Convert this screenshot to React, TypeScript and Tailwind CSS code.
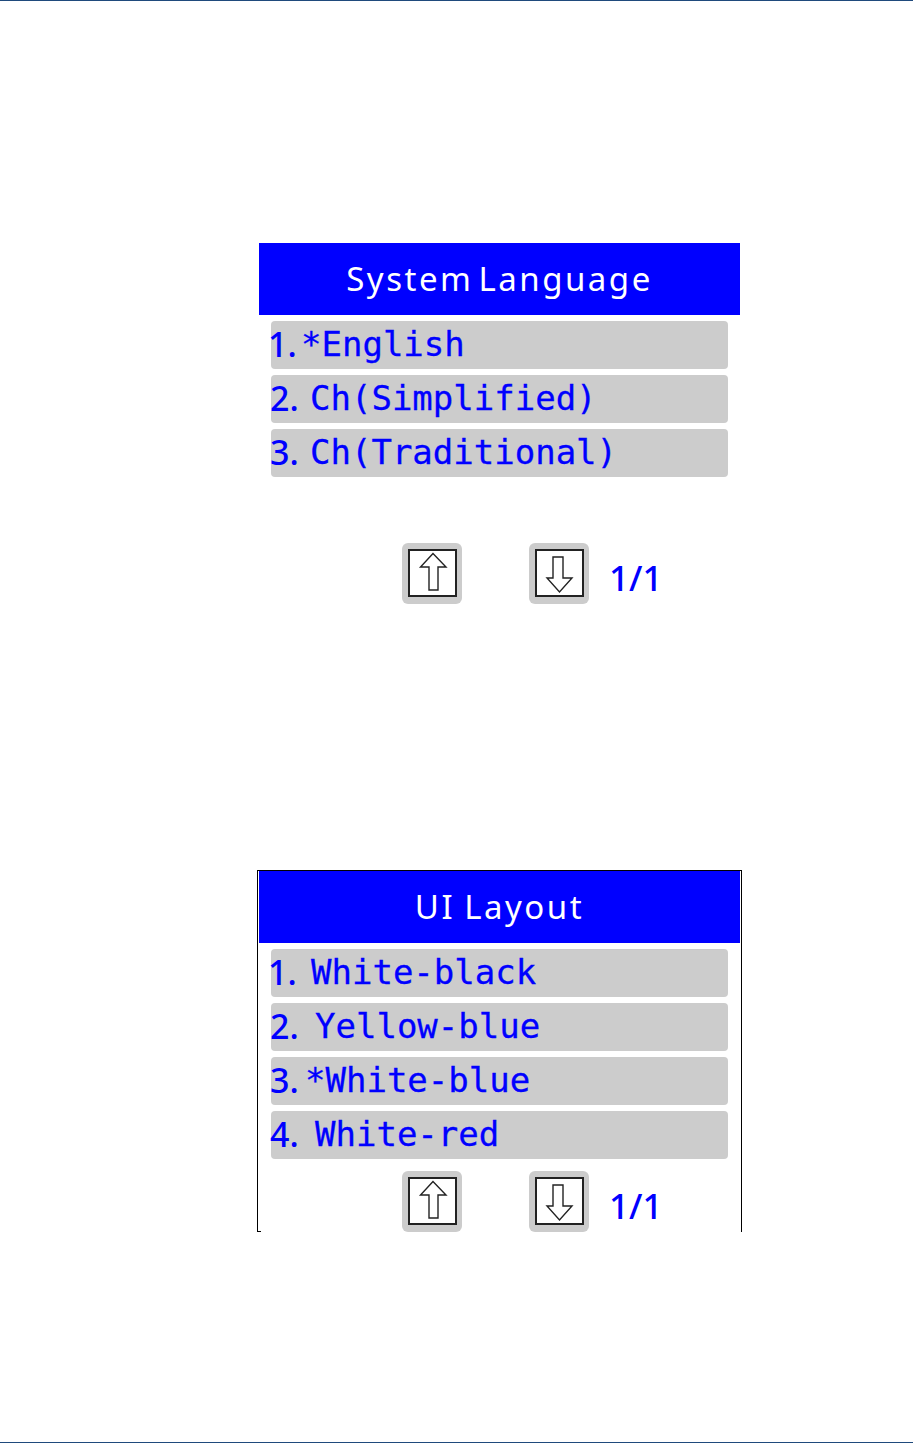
import React from "react";

const mono = { fontFamily: '"DejaVu Sans Mono", "Liberation Mono", monospace' };
const sans = { fontFamily: '"Noto Sans", "Open Sans", sans-serif' };

type Row = { num: string; text: string; off: number };

function ListRow({ r }: { r: Row }) {
  return (
    <div className="relative h-[48px] w-[457px] rounded-[4px] bg-[#cccccc] text-[#0000ff]">
      <span
        className={
          "absolute top-[3px] text-[34px] font-medium leading-[40px] " +
          (r.num === "1." ? "left-[-3px]" : "left-[-1px]")
        }
        style={sans}
      >
        {r.num}
      </span>
      <span
        className="absolute top-[3px] text-[34px] leading-[40px] whitespace-pre [-webkit-text-stroke:0.3px_#0000ff]"
        style={{ ...mono, left: r.off }}
      >
        {r.text}
      </span>
    </div>
  );
}

function UpBtn() {
  return (
    <div className="flex h-[61px] w-[60px] items-start justify-center rounded-[6px] bg-[#cccccc] pt-[6px]">
      <svg width="49" height="48" viewBox="0 0 49 48">
        <rect x="1" y="1" width="47" height="46" fill="#fff" stroke="#222" strokeWidth="2" />
        <polygon
          points="25,4.5 12.5,18 21,18 21,41 30,41 30,18 38,18"
          fill="#fff"
          stroke="#222"
          strokeWidth="1.4"
          strokeLinejoin="miter"
        />
      </svg>
    </div>
  );
}

function DownBtn() {
  return (
    <div className="flex h-[61px] w-[60px] items-start justify-center rounded-[6px] bg-[#cccccc] pt-[6px]">
      <svg width="49" height="48" viewBox="0 0 49 48">
        <rect x="1" y="1" width="47" height="46" fill="#fff" stroke="#222" strokeWidth="2" />
        <polygon
          points="18,8 28,8 28,29 37,29 24.5,43 12,29 18,29"
          fill="#fff"
          stroke="#222"
          strokeWidth="1.4"
          strokeLinejoin="miter"
        />
      </svg>
    </div>
  );
}

function Pager() {
  return (
    <div className="flex items-start">
      <div className="ml-[143px]">
        <UpBtn />
      </div>
      <div className="ml-[67px]">
        <DownBtn />
      </div>
      <div
        className="ml-[20px] mt-[15px] text-[35px] font-medium leading-[40px] text-[#0000ff]"
        style={sans}
      >
        1/1
      </div>
    </div>
  );
}

function Header({ title, wide }: { title: string; wide?: boolean }) {
  return (
    <div
      className={
        "flex h-[72px] w-[481px] items-center justify-center bg-[#0000ff] text-[33px] tracking-[2.5px] text-white " +
        (wide ? "[word-spacing:-2px]" : "[word-spacing:-6px]")
      }
      style={sans}
    >
      <span className="whitespace-pre">{title}</span>
    </div>
  );
}

const rows1: Row[] = [
  { num: "1.", text: "*English", off: 30 },
  { num: "2.", text: "Ch(Simplified)", off: 39 },
  { num: "3.", text: "Ch(Traditional)", off: 39 },
];

const rows2: Row[] = [
  { num: "1.", text: "White-black", off: 40 },
  { num: "2.", text: "Yellow-blue", off: 44 },
  { num: "3.", text: "*White-blue", off: 34 },
  { num: "4.", text: "White-red", off: 44 },
];

export default function App() {
  return (
    <div className="flex h-[1443px] w-[913px] flex-col border-t border-b border-[#1f4a7c] bg-white">
      {/* Panel 1 */}
      <div className="ml-[259px] mt-[242px] flex w-[481px] flex-col">
        <Header title="System Language" />
        <div className="ml-[12px] mt-[6px] flex flex-col gap-[6px]">
          {rows1.map((r) => (
            <ListRow key={r.num} r={r} />
          ))}
        </div>
        <div className="mt-[66px]">
          <Pager />
        </div>
      </div>

      {/* Panel 2 */}
      <div className="relative ml-[257px] mt-[266px] flex h-[362px] w-[485px] flex-col border-x border-t border-black pl-[1px]">
        <Header title="UI Layout" wide />
        <div className="ml-[12px] mt-[6px] flex flex-col gap-[6px]">
          {rows2.map((r) => (
            <ListRow key={r.num} r={r} />
          ))}
        </div>
        <div className="mt-[12px]">
          <Pager />
        </div>
        <div className="absolute bottom-0 left-0 h-[1px] w-[3px] bg-black" />
      </div>
    </div>
  );
}
